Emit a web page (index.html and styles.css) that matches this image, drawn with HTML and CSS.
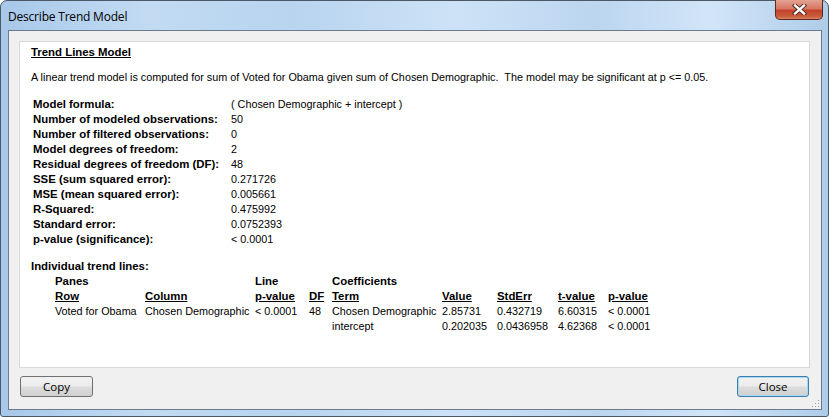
FILE: index.html
```html
<!DOCTYPE html>
<html>
<head>
<meta charset="utf-8">
<title>Describe Trend Model</title>
<link rel="stylesheet" href="styles.css">
</head>
<body>
<div class="window">
  <div class="titlebar">
    <span class="title">Describe Trend Model</span>
    <div class="close-x">
      <svg width="17" height="11" viewBox="0 0 17 11">
        <path d="M4 1.5 L13 9.5 M13 1.5 L4 9.5" stroke="#4a2018" stroke-width="4.2" stroke-linecap="square"/>
        <path d="M4 1.5 L13 9.5 M13 1.5 L4 9.5" stroke="#ffffff" stroke-width="2.4" stroke-linecap="square"/>
      </svg>
    </div>
  </div>
  <div class="client">
    <div class="panel">
      <div class="heading">Trend Lines Model</div>
      <div class="desc">A linear trend model is computed for sum of Voted for Obama given sum of Chosen Demographic.&nbsp; The model may be significant at p &lt;= 0.05.</div>
      <div class="stats">
        <div class="lbl">Model formula:</div><div class="val">( Chosen Demographic + intercept )</div>
        <div class="lbl">Number of modeled observations:</div><div class="val">50</div>
        <div class="lbl">Number of filtered observations:</div><div class="val">0</div>
        <div class="lbl">Model degrees of freedom:</div><div class="val">2</div>
        <div class="lbl">Residual degrees of freedom (DF):</div><div class="val">48</div>
        <div class="lbl">SSE (sum squared error):</div><div class="val">0.271726</div>
        <div class="lbl">MSE (mean squared error):</div><div class="val">0.005661</div>
        <div class="lbl">R-Squared:</div><div class="val">0.475992</div>
        <div class="lbl">Standard error:</div><div class="val">0.0752393</div>
        <div class="lbl">p-value (significance):</div><div class="val">&lt; 0.0001</div>
      </div>
      <div class="subhead">Individual trend lines:</div>
      <div class="lines">
        <div class="b">Panes</div><div></div><div class="b">Line</div><div></div><div class="b">Coefficients</div><div></div><div></div><div></div><div></div>
        <div class="bu">Row</div><div class="bu">Column</div><div class="bu">p-value</div><div class="bu">DF</div><div class="bu">Term</div><div class="bu">Value</div><div class="bu">StdErr</div><div class="bu">t-value</div><div class="bu">p-value</div>
        <div>Voted for Obama</div><div>Chosen Demographic</div><div>&lt; 0.0001</div><div>48</div><div>Chosen Demographic</div><div>2.85731</div><div>0.432719</div><div>6.60315</div><div>&lt; 0.0001</div>
        <div></div><div></div><div></div><div></div><div>intercept</div><div>0.202035</div><div>0.0436958</div><div>4.62368</div><div>&lt; 0.0001</div>
      </div>
    </div>
    <div class="buttons">
      <button class="btn">Copy</button>
      <button class="btn default">Close</button>
    </div>
    <div class="grip"></div>
  </div>
</div>
</body>
</html>
```
FILE: styles.css
```css
html, body {
  margin: 0;
  padding: 0;
  width: 829px;
  height: 417px;
  overflow: hidden;
  background: #ffffff;
}

.window {
  position: relative;
  box-sizing: border-box;
  width: 829px;
  height: 417px;
  border: 1px solid #4a5868;
  border-radius: 7px 7px 3px 3px;
  background: linear-gradient(to right, #a8c8e9 0%, #c2dbf3 18%, #b8d4ef 35%, #cde2f6 55%, #bcd6f0 72%, #d2e5f8 86%, #aecce9 100%);
  display: flex;
  flex-direction: column;
}

.titlebar {
  position: relative;
  height: 29px;
  display: flex;
  align-items: center;
  padding-left: 7px;
}

.title {
  font-family: "Open Sans", "Noto Sans", sans-serif;
  font-size: 12px;
  color: #000000;
  letter-spacing: -0.2px;
  margin-top: 2px;
}

.close-x {
  position: absolute;
  top: -1px;
  right: 5px;
  width: 48px;
  height: 20px;
  box-sizing: border-box;
  border: 1px solid #5d2a22;
  border-top: none;
  border-radius: 0 0 5px 5px;
  background: linear-gradient(to bottom, #e4a293 0%, #d77764 45%, #c4432a 55%, #c85a3c 85%, #d7825f 100%);
  display: flex;
  align-items: center;
  justify-content: center;
}

.client {
  position: relative;
  flex: 1;
  margin: 0 6px 6px 7px;
  border: 1px solid #6a7b8e;
  background: #f0f0f0;
  display: flex;
  flex-direction: column;
  padding: 10px 11px 0 10px;
  font-family: "Liberation Sans", Arial, sans-serif;
  font-size: 10.8px;
  color: #000000;
}

.panel {
  height: 327px;
  box-sizing: border-box;
  background: #ffffff;
  border: 1px solid #d9d9d9;
  padding: 3px 11px 0 11px;
  line-height: 15px;
}

.heading {
  font-weight: bold;
  font-size: 11.4px;
  text-decoration: underline;
}

.desc {
  margin-top: 10px;
}

.stats {
  margin-top: 12px;
  padding-left: 2px;
  display: grid;
  grid-template-columns: 198px auto;
}

.lbl {
  font-weight: bold;
  font-size: 11.4px;
}

.subhead {
  margin-top: 12px;
  font-weight: bold;
  font-size: 11.4px;
}

.lines {
  padding-left: 24px;
  display: grid;
  grid-template-columns: 90px 110px 54px 23px 110px 55px 61px 50px auto;
  white-space: nowrap;
}

.lines .b {
  font-weight: bold;
  font-size: 11.4px;
}

.lines .bu {
  font-weight: bold;
  font-size: 11.4px;
  text-decoration: underline;
}

.buttons {
  display: flex;
  justify-content: space-between;
  margin-top: 8px;
  padding-left: 1px;
  padding-right: 1px;
}

.btn {
  width: 73px;
  height: 21px;
  box-sizing: border-box;
  border: 1px solid #707070;
  border-radius: 3px;
  background: linear-gradient(to bottom, #f2f2f2 0%, #ebebeb 48%, #dddddd 52%, #cfcfcf 100%);
  font-family: "Open Sans", "Noto Sans", sans-serif;
  font-size: 11.5px;
  color: #000000;
  padding: 0;
  line-height: 18px;
}

.btn.default {
  width: 72px;
  border-color: #3c7fb1;
  box-shadow: inset 0 0 0 1px #a7d9f5;
}

.grip {
  position: absolute;
  right: 2px;
  bottom: 2px;
  width: 8px;
  height: 8px;
  background-image: radial-gradient(circle, #a0a0a0 0.8px, transparent 1px);
  background-size: 3px 3px;
  clip-path: polygon(100% 0, 100% 100%, 0 100%);
}
```
